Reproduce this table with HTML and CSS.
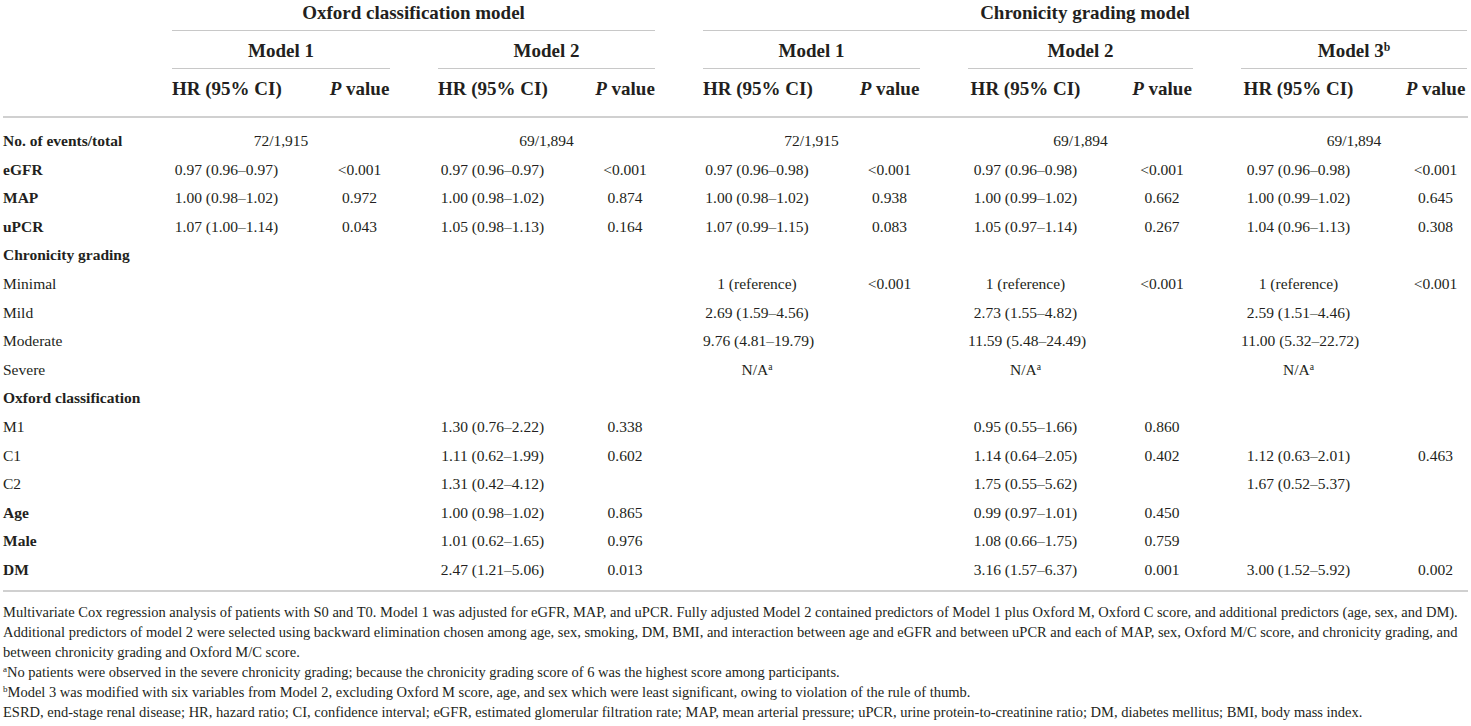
FILE: index.html
```html
<!DOCTYPE html>
<html lang="en">
<head>
<meta charset="utf-8">
<title>Multivariate Cox regression</title>
<link rel="stylesheet" href="styles.css">
</head>
<body>
<div class="table">
  <div class="head">
    <div class="row h1">
      <div class="c-label"></div>
      <div class="span4 rule">Oxford classification model</div>
      <div class="span6 rule">Chronicity grading model</div>
    </div>
    <div class="row h2">
      <div class="c-label"></div>
      <div class="span2 rule">Model 1</div>
      <div class="span2 rule">Model 2</div>
      <div class="span2 rule">Model 1</div>
      <div class="span2 rule">Model 2</div>
      <div class="span2 rule">Model 3<sup>b</sup></div>
    </div>
    <div class="row h3">
      <div class="c-label"></div>
      <div>HR (95% CI)</div><div><i>P</i> value</div>
      <div>HR (95% CI)</div><div><i>P</i> value</div>
      <div>HR (95% CI)</div><div><i>P</i> value</div>
      <div>HR (95% CI)</div><div><i>P</i> value</div>
      <div>HR (95% CI)</div><div><i>P</i> value</div>
    </div>
  </div>
  <div class="body">
    <div class="row">
      <div class="c-label b">No. of events/total</div>
      <div class="span2">72/1,915</div>
      <div class="span2">69/1,894</div>
      <div class="span2">72/1,915</div>
      <div class="span2">69/1,894</div>
      <div class="span2">69/1,894</div>
    </div>
    <div class="row">
      <div class="c-label b">eGFR</div>
      <div>0.97 (0.96–0.97)</div><div>&lt;0.001</div>
      <div>0.97 (0.96–0.97)</div><div>&lt;0.001</div>
      <div>0.97 (0.96–0.98)</div><div>&lt;0.001</div>
      <div>0.97 (0.96–0.98)</div><div>&lt;0.001</div>
      <div>0.97 (0.96–0.98)</div><div>&lt;0.001</div>
    </div>
    <div class="row">
      <div class="c-label b">MAP</div>
      <div>1.00 (0.98–1.02)</div><div>0.972</div>
      <div>1.00 (0.98–1.02)</div><div>0.874</div>
      <div>1.00 (0.98–1.02)</div><div>0.938</div>
      <div>1.00 (0.99–1.02)</div><div>0.662</div>
      <div>1.00 (0.99–1.02)</div><div>0.645</div>
    </div>
    <div class="row">
      <div class="c-label b">uPCR</div>
      <div>1.07 (1.00–1.14)</div><div>0.043</div>
      <div>1.05 (0.98–1.13)</div><div>0.164</div>
      <div>1.07 (0.99–1.15)</div><div>0.083</div>
      <div>1.05 (0.97–1.14)</div><div>0.267</div>
      <div>1.04 (0.96–1.13)</div><div>0.308</div>
    </div>
    <div class="row">
      <div class="c-label b">Chronicity grading</div>
    </div>
    <div class="row">
      <div class="c-label">Minimal</div>
      <div></div><div></div><div></div><div></div>
      <div>1 (reference)</div><div>&lt;0.001</div>
      <div>1 (reference)</div><div>&lt;0.001</div>
      <div>1 (reference)</div><div>&lt;0.001</div>
    </div>
    <div class="row">
      <div class="c-label">Mild</div>
      <div></div><div></div><div></div><div></div>
      <div>2.69 (1.59–4.56)</div><div></div>
      <div>2.73 (1.55–4.82)</div><div></div>
      <div>2.59 (1.51–4.46)</div><div></div>
    </div>
    <div class="row">
      <div class="c-label">Moderate</div>
      <div></div><div></div><div></div><div></div>
      <div>9.76 (4.81–19.79)</div><div></div>
      <div>11.59 (5.48–24.49)</div><div></div>
      <div>11.00 (5.32–22.72)</div><div></div>
    </div>
    <div class="row">
      <div class="c-label">Severe</div>
      <div></div><div></div><div></div><div></div>
      <div>N/A<sup>a</sup></div><div></div>
      <div>N/A<sup>a</sup></div><div></div>
      <div>N/A<sup>a</sup></div><div></div>
    </div>
    <div class="row">
      <div class="c-label b">Oxford classification</div>
    </div>
    <div class="row">
      <div class="c-label">M1</div>
      <div></div><div></div>
      <div>1.30 (0.76–2.22)</div><div>0.338</div>
      <div></div><div></div>
      <div>0.95 (0.55–1.66)</div><div>0.860</div>
      <div></div><div></div>
    </div>
    <div class="row">
      <div class="c-label">C1</div>
      <div></div><div></div>
      <div>1.11 (0.62–1.99)</div><div>0.602</div>
      <div></div><div></div>
      <div>1.14 (0.64–2.05)</div><div>0.402</div>
      <div>1.12 (0.63–2.01)</div><div>0.463</div>
    </div>
    <div class="row">
      <div class="c-label">C2</div>
      <div></div><div></div>
      <div>1.31 (0.42–4.12)</div><div></div>
      <div></div><div></div>
      <div>1.75 (0.55–5.62)</div><div></div>
      <div>1.67 (0.52–5.37)</div><div></div>
    </div>
    <div class="row">
      <div class="c-label b">Age</div>
      <div></div><div></div>
      <div>1.00 (0.98–1.02)</div><div>0.865</div>
      <div></div><div></div>
      <div>0.99 (0.97–1.01)</div><div>0.450</div>
      <div></div><div></div>
    </div>
    <div class="row">
      <div class="c-label b">Male</div>
      <div></div><div></div>
      <div>1.01 (0.62–1.65)</div><div>0.976</div>
      <div></div><div></div>
      <div>1.08 (0.66–1.75)</div><div>0.759</div>
      <div></div><div></div>
    </div>
    <div class="row">
      <div class="c-label b">DM</div>
      <div></div><div></div>
      <div>2.47 (1.21–5.06)</div><div>0.013</div>
      <div></div><div></div>
      <div>3.16 (1.57–6.37)</div><div>0.001</div>
      <div>3.00 (1.52–5.92)</div><div>0.002</div>
    </div>
  </div>
</div>
<div class="notes">
  <p>Multivariate Cox regression analysis of patients with S0 and T0. Model 1 was adjusted for eGFR, MAP, and uPCR. Fully adjusted Model 2 contained predictors of Model 1 plus Oxford M, Oxford C score, and additional predictors (age, sex, and DM).<br>Additional predictors of model 2 were selected using backward elimination chosen among age, sex, smoking, DM, BMI, and interaction between age and eGFR and between uPCR and each of MAP, sex, Oxford M/C score, and chronicity grading, and<br>between chronicity grading and Oxford M/C score.</p>
  <p><sup>a</sup>No patients were observed in the severe chronicity grading; because the chronicity grading score of 6 was the highest score among participants.</p>
  <p><sup>b</sup>Model 3 was modified with six variables from Model 2, excluding Oxford M score, age, and sex which were least significant, owing to violation of the rule of thumb.</p>
  <p>ESRD, end-stage renal disease; HR, hazard ratio; CI, confidence interval; eGFR, estimated glomerular filtration rate; MAP, mean arterial pressure; uPCR, urine protein-to-creatinine ratio; DM, diabetes mellitus; BMI, body mass index.</p>
</div>
</body>
</html>
```

FILE: styles.css
```css
html, body {
  margin: 0;
  padding: 0;
  background: #ffffff;
}

body {
  font-family: "Liberation Serif", "Times New Roman", serif;
  color: #231f20;
  padding-left: 3px;
  width: 1465px;
}

.row {
  display: grid;
  grid-template-columns: 121px 109px 61px 109px 60px 108px 61px 115px 62px 115px 63px;
  column-gap: 48px;
  text-align: center;
  white-space: nowrap;
}

.c-label {
  text-align: left;
}

.b {
  font-weight: bold;
}

.span2 { grid-column: span 2; }
.span4 { grid-column: span 4; }
.span6 { grid-column: span 6; }

.head {
  font-weight: bold;
  font-size: 19px;
  line-height: 26px;
  border-bottom: 2px solid #d0d0d0;
}

.head .rule {
  border-bottom: 1.5px solid #c8c8c8;
}

.h1 > div {
  padding-bottom: 4px;
}

.h2 > div {
  padding-top: 7px;
  padding-bottom: 4px;
}

.h3 > div {
  padding-top: 7px;
  padding-bottom: 14px;
}

.head i {
  font-style: italic;
}

sup {
  font-size: 0.62em;
  line-height: 0;
  vertical-align: 0.55em;
}

.body {
  font-size: 15.5px;
  line-height: 28.6px;
  padding-top: 9px;
  padding-bottom: 5px;
  border-bottom: 2px solid #d0d0d0;
}

.notes {
  font-size: 14.5px;
  line-height: 20px;
  padding-top: 10px;
  white-space: nowrap;
}

.notes p {
  margin: 0;
}
```
